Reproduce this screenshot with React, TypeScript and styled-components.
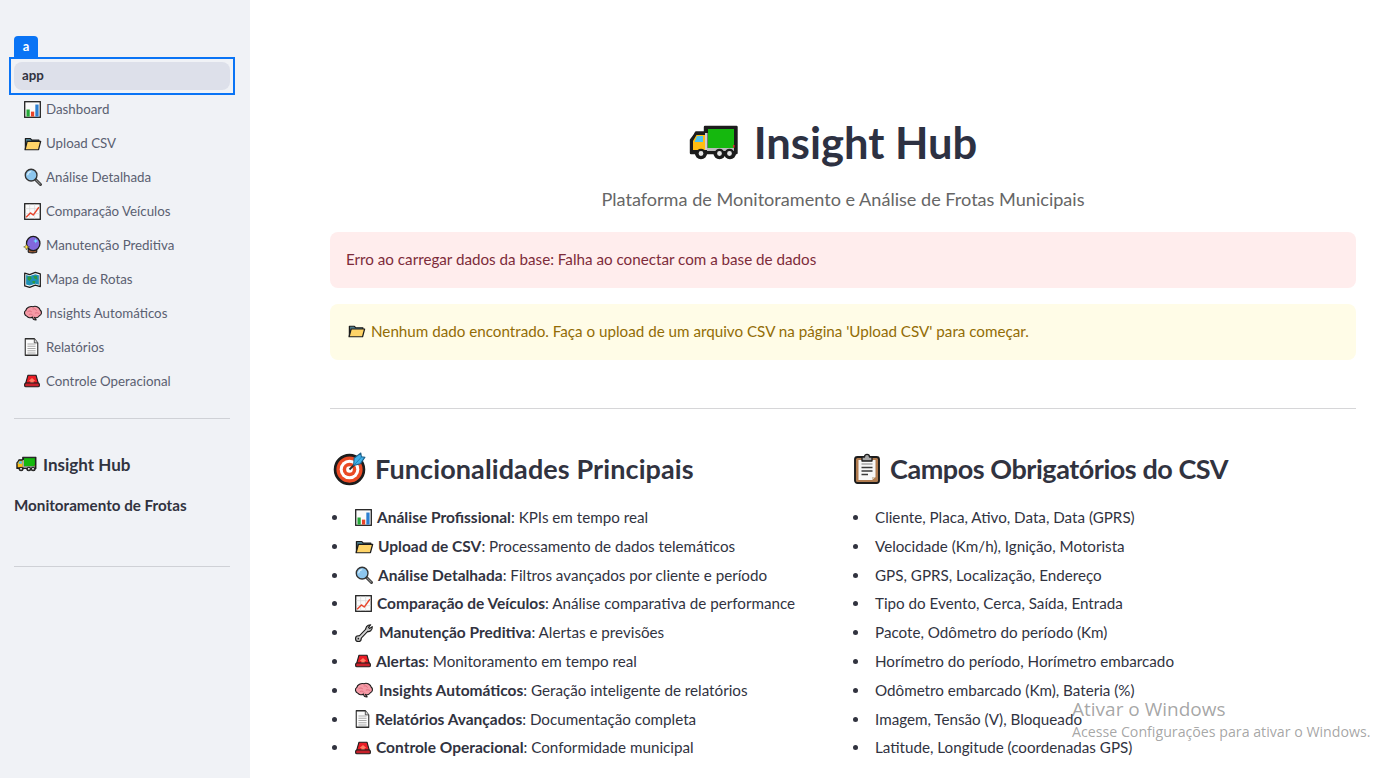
import React from "react";
import styled, { createGlobalStyle } from "styled-components";

const Global = createGlobalStyle`
  html, body { margin: 0; padding: 0; height: 100%; background: #fff; }
  body { font-family: Lato, "Noto Sans", sans-serif; color: #31333f; overflow: hidden; }
  #root { height: 100%; }
`;

const INK = "#1c1c1c";

type IconName = "truck" | "chart" | "folder" | "search" | "trend" | "ball" | "map" | "brain" | "doc" | "siren" | "target" | "clipboard" | "wrench";

const VIEWS: Partial<Record<IconName, string>> = {
  truck: "0 0 50 37",
  target: "0 0 32 32",
  clipboard: "0 0 26 31",
};

const art: Record<IconName, React.ReactNode> = {
  truck: (
    <>
      <path d="M16 3H47.5V29H46a5 5 0 0 1-10 0h-.5a5 5 0 0 1-10 0H17a5 5 0 0 1-10 0H2V16L5 12 7 8.5H16Z" fill={INK} stroke={INK} strokeWidth="2.4" strokeLinejoin="round" />
      <rect x="19" y="5" width="26" height="19" fill="#15b80e" />
      <path d="M4 17 7.5 11H16V26H4Z" fill="#ffbf12" />
      <path d="M8 12H14V18H5.5Z" fill="#4fc3ee" />
      <rect x="16" y="9" width="2.5" height="17" fill="#cfcfcf" />
      <rect x="18" y="24" width="27" height="3" fill="#bdbdbd" />
      <rect x="44" y="21" width="1.6" height="2.6" fill="#d4342b" />
      <circle cx="12" cy="29.5" r="3.6" fill="#e6e6e6" stroke={INK} strokeWidth="2.4" />
      <circle cx="30.5" cy="29.5" r="3.6" fill="#e6e6e6" stroke={INK} strokeWidth="2.4" />
      <circle cx="40.5" cy="29.5" r="3.6" fill="#e6e6e6" stroke={INK} strokeWidth="2.4" />
    </>
  ),
  chart: (
    <>
      <rect x="1" y="1" width="22" height="22" fill="#fbfbfb" stroke={INK} strokeWidth="1.8" />
      <rect x="3.5" y="12" width="4.6" height="10" fill="#25a838" />
      <rect x="9.8" y="15" width="4.6" height="7" fill="#e8452c" />
      <rect x="16" y="5" width="4.6" height="17" fill="#2c7fd1" />
    </>
  ),
  folder: (
    <>
      <path d="M2 21V4H9L11 6.5H21V11H6L2 21Z" fill="#4d7d8d" stroke={INK} strokeWidth="1.8" strokeLinejoin="round" />
      <path d="M4.500 8.500H23.500L20.500 22H1.500Z" fill="#ffd468" stroke={INK} strokeWidth="1.8" strokeLinejoin="round" />
    </>
  ),
  search: (
    <>
      <path d="M15 15 22 22" stroke="#3a3a3a" strokeWidth="4" strokeLinecap="round" />
      <path d="M16 16 21.5 21.5" stroke="#8d8d8d" strokeWidth="1.4" strokeLinecap="round" />
      <circle cx="9.5" cy="9.5" r="7.8" fill="#8cc6ee" stroke="#333" strokeWidth="1.8" />
      <path d="M5 9a4.5 4.5 0 0 1 4-4" stroke="#dff1fc" strokeWidth="1.6" fill="none" strokeLinecap="round" />
    </>
  ),
  trend: (
    <>
      <rect x="1" y="1" width="22" height="22" fill="#fbfbfb" stroke={INK} strokeWidth="1.8" />
      <path d="M8 2V22M15 2V22M2 8H22M2 15H22" stroke="#d7d7d7" strokeWidth="1" />
      <path d="M3 20 9 14 13 17 21 6" fill="none" stroke="#e8452c" strokeWidth="2" strokeLinejoin="round" />
    </>
  ),
  ball: (
    <>
      <path d="M6 17H18V21C18 23 6 23 6 21Z" fill="#9a5a33" stroke={INK} strokeWidth="1.6" strokeLinejoin="round" />
      <circle cx="13" cy="10" r="9.500" fill="#8168dc" stroke={INK} strokeWidth="1.8" />
      <path d="M16.500 3 17.500 5.500 20 6.500 17.500 7.500 16.500 10 15.500 7.500 13 6.500 15.500 5.500Z" fill="#6fdcff" />
      <path d="M3.500 10.500 4.800 13.500 7.800 14.500 4.800 15.700 3.500 18.700 2.200 15.700-.5 14.500 2.200 13.500Z" fill="#ffe23d" stroke={INK} strokeWidth=".6" />
    </>
  ),
  map: (
    <>
      <path d="M1 3 8 5 16 2 23 4V22L16 20 8 23 1 21Z" fill="#fff" stroke={INK} strokeWidth="1.8" strokeLinejoin="round" />
      <path d="M3 5.500 8 7 16 4.500 21 6V19.500L16 18 8 20.500 3 19Z" fill="#1f8fb5" />
      <path d="M5 8 9 7.500 11 10 8 14 5 12ZM13 7 18 7 19 12 15 11ZM12 14 16 14 15 18 12 17Z" fill="#2f9a3d" />
    </>
  ),
  brain: (
    <>
      <path d="M4 17C0 15-.5 10 2.500 8 3 4 8 1.500 12 2.500 16 1 21 3.500 21.500 7.500 24.500 10 23.500 15 20.500 16 19.500 19 16 19.500 14 18.500 14.500 21 17 22 16 22.500 13 22.500 11.500 20 11.500 18 9 20 5.500 19.500 4 17Z" fill="#f59aa6" stroke={INK} strokeWidth="1.5" strokeLinejoin="round" />
      <path d="M5 10C7 8 9 9 10 10M12 6C14 5 16 6 16.500 8M7 14C9 13 11 14 12 15.500M15 12C17 11 19 12 20 13" fill="none" stroke="#d96577" strokeWidth="1.1" strokeLinecap="round" />
    </>
  ),
  doc: (
    <>
      <path d="M2 1H16.500L22 6.500V23H2Z" fill="#fbfbfb" stroke="#2e2e2e" strokeWidth="1.800" strokeLinejoin="round" />
      <path d="M16.500 1V6.500H22" fill="#d9d9d9" stroke="#2e2e2e" strokeWidth="1.100" />
      <path d="M5.500 8H18.500M5.500 11H18.500M5.500 14H18.500M5.500 17H18.500M5.500 20H18.500" stroke="#a9a9a9" strokeWidth="1.400" />
    </>
  ),
  siren: (
    <>
      <path d="M6 2H18L21.500 16H2.500Z" fill="#ea1d26" stroke={INK} strokeWidth="1.700" strokeLinejoin="round" />
      <path d="M12 7 17 12H14.500V16H9.500V12H7Z" fill="#ff7d63" />
      <rect x="1" y="15.500" width="22" height="6.500" rx="2" fill="#c8202a" stroke={INK} strokeWidth="1.700" />
    </>
  ),
  target: (
    <>
      <circle cx="16" cy="17" r="14" fill="#ea4a24" stroke={INK} strokeWidth="2.600" />
      <circle cx="16" cy="17" r="9.500" fill="#fff" />
      <circle cx="16" cy="17" r="6.600" fill="#ea4a24" />
      <circle cx="16" cy="17" r="3.200" fill="#fff" />
      <path d="M16 17 22 11" stroke="#2b2b2b" strokeWidth="1.800" />
      <path d="M20 13 20.500 6 27 1 27.500 4.500 31 5 26.500 11.500Z" fill="#3fb0e8" stroke="#1d5f88" strokeWidth="1" strokeLinejoin="round" />
      <path d="M21 12 28 4.500" stroke="#1d7fb8" strokeWidth=".9" />
    </>
  ),
  clipboard: (
    <>
      <rect x="1" y="4" width="24" height="26" rx="2.500" fill="#b17c50" stroke={INK} strokeWidth="1.900" />
      <path d="M4.500 7H21.500V24L18 27H4.500Z" fill="#f8f8f8" />
      <path d="M18 27V24H21.500Z" fill="#d6c6b0" />
      <path d="M7.500 11H18.500" stroke="#9b9b9b" strokeWidth="1.300" />
      <path d="M7.500 14.500H18.500M7.500 18H18.500M7.500 21.500H14" stroke="#3a3a3a" strokeWidth="1.300" />
      <path d="M8 4H10.500C10.500 .5 15.500 .5 15.500 4H18V8H8Z" fill="#a7a7a7" stroke={INK} strokeWidth="1.300" strokeLinejoin="round" />
    </>
  ),
  wrench: (
    <>
      <path d="M5 19.500 15.500 8.500" stroke={INK} strokeWidth="5.400" strokeLinecap="round" />
      <path d="M15 9C13 5 16 1 21 1L18 4.500 19.500 6 23 3.500C23.500 8 19.500 11.500 15.500 9.500Z" fill="#bdbdbd" stroke={INK} strokeWidth="1.500" strokeLinejoin="round" />
      <circle cx="4.500" cy="19.500" r="3.800" fill="#bdbdbd" stroke={INK} strokeWidth="1.500" />
      <path d="M5 19.500 15.500 8.500" stroke="#d5d5d5" strokeWidth="2.600" strokeLinecap="round" />
      <circle cx="4.500" cy="19.500" r="1.100" fill={INK} />
    </>
  ),
};

const Glyph = styled.svg<{ $w: number; $h: number; $gap: number }>`
  flex: none;
  width: ${(p) => p.$w}px;
  height: ${(p) => p.$h}px;
  margin-right: ${(p) => p.$gap}px;
  overflow: visible;
`;

function Icon({ name, w = 17, h, gap = 0 }: { name: IconName; w?: number; h?: number; gap?: number }) {
  return (
    <Glyph viewBox={VIEWS[name] ?? "0 0 24 24"} $w={w} $h={h ?? w} $gap={gap} preserveAspectRatio="none" aria-hidden>
      {art[name]}
    </Glyph>
  );
}

const Page = styled.div`
  position: relative;
  display: flex;
  height: 778px;
  overflow: hidden;
`;

const Sidebar = styled.aside`
  position: relative;
  flex: none;
  width: 250px;
  box-sizing: border-box;
  padding: 62px 20px 0 14px;
  background: #f0f2f6;
`;

const Nav = styled.nav`
  display: flex;
  flex-direction: column;
  gap: 6px;
`;

const Tag = styled.span`
  position: absolute;
  left: 14px;
  top: 36px;
  width: 24px;
  height: 21px;
  border-radius: 4px 4px 0 0;
  background: #0a74f5;
  color: #fff;
  font-size: 13px;
  line-height: 20px;
  font-weight: 700;
  text-align: center;
`;

const ActiveFrame = styled.div`
  margin: -5px;
  padding: 3px;
  border: 2px solid #0a74f5;
`;

const ActiveLink = styled.div`
  box-sizing: border-box;
  height: 28px;
  padding: 0 0 2px 8px;
  border-radius: 8px;
  background: #dde0ea;
  color: #31333f;
  font-size: 13.3px;
  font-weight: 700;
  line-height: 26px;
`;

const NavLink = styled.div`
  display: flex;
  align-items: center;
  box-sizing: border-box;
  height: 28px;
  padding: 0 0 2px 10px;
  color: #5a6071;
  font-size: 13.3px;
`;

const NavSlot = styled.span`
  display: flex;
  flex: none;
  width: 22px;
`;

const SideRule = styled.hr`
  margin: 22px 0 0;
  border: 0;
  border-top: 1px solid #cfd1d6;
`;

const SideBrand = styled.div`
  display: flex;
  align-items: center;
  box-sizing: border-box;
  height: 30px;
  margin-top: 31px;
  padding: 0 0 2px 2px;
  color: #31333f;
  font-size: 17px;
  font-weight: 700;
`;

const SideTagline = styled.div`
  box-sizing: border-box;
  height: 24px;
  margin-top: 14px;
  margin-bottom: 48px;
  padding-bottom: 2px;
  color: #31333f;
  font-size: 15.2px;
  font-weight: 700;
  line-height: 22px;
`;

const Main = styled.main`
  flex: 1;
  min-width: 0;
  padding: 114px 31px 0 80px;
`;

const Title = styled.h1`
  display: flex;
  align-items: center;
  justify-content: center;
  box-sizing: border-box;
  height: 58px;
  margin: 0;
  padding: 0 20px 2px 0;
  color: #2d3142;
  font-size: 43.5px;
  font-weight: 700;
`;

const Subtitle = styled.p`
  box-sizing: border-box;
  height: 30px;
  margin: 13px 0 0;
  color: #666;
  font-size: 18.1px;
  line-height: 28px;
  text-align: center;
`;

const Alert = styled.div<{ $kind: "error" | "warning" }>`
  display: flex;
  align-items: center;
  box-sizing: border-box;
  height: 56px;
  margin-top: ${(p) => (p.$kind === "error" ? 17 : 16)}px;
  padding: 0 0 2px ${(p) => (p.$kind === "error" ? 16 : 18)}px;
  border-radius: 8px;
  background: ${(p) => (p.$kind === "error" ? "#ffeded" : "#fffce7")};
  color: ${(p) => (p.$kind === "error" ? "#7d2b3a" : "#926c05")};
  font-size: 15.2px;
`;

const Rule = styled.hr`
  margin: 48px 0 0;
  border: 0;
  border-top: 1px solid #d6d6d8;
`;

const Columns = styled.div`
  display: grid;
  grid-template-columns: 1fr 1fr;
  column-gap: 16px;
  margin-top: 41px;
`;

const Heading = styled.h2<{ $inset: number; $track: number }>`
  display: flex;
  align-items: center;
  box-sizing: border-box;
  height: 40px;
  margin: 0;
  padding: 0 0 3px ${(p) => p.$inset}px;
  color: #31333f;
  font-size: 27px;
  font-weight: 700;
  letter-spacing: ${(p) => p.$track}px;
`;

const List = styled.ul`
  margin: 13px 0 0;
  padding: 0 0 0 24px;
  list-style: none;
`;

const Item = styled.li`
  position: relative;
  height: 28.8px;
  font-size: 15.2px;
  line-height: 28.8px;

  &::before {
    content: "";
    position: absolute;
    left: -22.5px;
    top: 12px;
    width: 5px;
    height: 5px;
    border-radius: 50%;
    background: #31333f;
  }
`;

const ItemBody = styled.span`
  display: inline-flex;
  align-items: center;
  height: 28.8px;
  padding-left: 1px;
  vertical-align: top;
  white-space: pre;
`;

const Strong = styled.b`
  font-size: 15.5px;
  font-weight: 700;
`;

const Watermark = styled.div`
  position: absolute;
  left: 1072px;
  top: 696px;
  color: rgba(110, 110, 110, 0.62);
  font-family: "Open Sans", sans-serif;
  pointer-events: none;
`;

const WatermarkTitle = styled.div`
  font-size: 19px;
  line-height: 26px;
`;

const WatermarkText = styled.div`
  font-size: 14.2px;
  line-height: 20px;
`;

const nav: [IconName, string, number?, number?][] = [
  ["chart", "Dashboard"],
  ["folder", "Upload CSV", 17, 15],
  ["search", "Análise Detalhada", 18],
  ["trend", "Comparação Veículos"],
  ["ball", "Manutenção Preditiva", 17, 18],
  ["map", "Mapa de Rotas"],
  ["brain", "Insights Automáticos", 18, 16],
  ["doc", "Relatórios", 15, 18],
  ["siren", "Controle Operacional", 16, 14],
];

const features: [IconName, number, number, number, string, string][] = [
  ["chart", 17, 17, 5, "Análise Profissional", ": KPIs em tempo real"],
  ["folder", 18, 15, 5, "Upload de CSV", ": Processamento de dados telemáticos"],
  ["search", 18, 18, 5, "Análise Detalhada", ": Filtros avançados por cliente e período"],
  ["trend", 17, 17, 5, "Comparação de Veículos", ": Análise comparativa de performance"],
  ["wrench", 18, 18, 6, "Manutenção Preditiva", ": Alertas e previsões"],
  ["siren", 16, 14, 5, "Alertas", ": Monitoramento em tempo real"],
  ["brain", 18, 16, 6, "Insights Automáticos", ": Geração inteligente de relatórios"],
  ["doc", 15, 18, 5, "Relatórios Avançados", ": Documentação completa"],
  ["siren", 16, 14, 5, "Controle Operacional", ": Conformidade municipal"],
];

const fields = [
  "Cliente, Placa, Ativo, Data, Data (GPRS)",
  "Velocidade (Km/h), Ignição, Motorista",
  "GPS, GPRS, Localização, Endereço",
  "Tipo do Evento, Cerca, Saída, Entrada",
  "Pacote, Odômetro do período (Km)",
  "Horímetro do período, Horímetro embarcado",
  "Odômetro embarcado (Km), Bateria (%)",
  "Imagem, Tensão (V), Bloqueado",
  "Latitude, Longitude (coordenadas GPS)",
];

export default function App() {
  return (
    <Page>
      <Global />
      <Sidebar>
        <Tag>a</Tag>
        <Nav>
          <ActiveFrame>
            <ActiveLink>app</ActiveLink>
          </ActiveFrame>
          {nav.map(([icon, label, w, h]) => (
            <NavLink key={label}>
              <NavSlot>
                <Icon name={icon} w={w ?? 17} h={h} />
              </NavSlot>
              {label}
            </NavLink>
          ))}
        </Nav>
        <SideRule />
        <SideBrand>
          <Icon name="truck" w={21} h={16} gap={6} />
          Insight Hub
        </SideBrand>
        <SideTagline>Monitoramento de Frotas</SideTagline>
        <SideRule />
      </Sidebar>
      <Main>
        <Title>
          <Icon name="truck" w={50} h={37} gap={15} />
          Insight Hub
        </Title>
        <Subtitle>Plataforma de Monitoramento e Análise de Frotas Municipais</Subtitle>
        <Alert $kind="error">Erro ao carregar dados da base: Falha ao conectar com a base de dados</Alert>
        <Alert $kind="warning">
          <Icon name="folder" w={17} h={14} gap={6} />
          Nenhum dado encontrado. Faça o upload de um arquivo CSV na página 'Upload CSV' para começar.
        </Alert>
        <Rule />
        <Columns>
          <div>
            <Heading $inset={3} $track={0.1}>
              <Icon name="target" w={33} gap={9} />
              Funcionalidades Principais
            </Heading>
            <List>
              {features.map(([icon, w, h, gap, name, rest]) => (
                <Item key={name}>
                  <ItemBody>
                    <Icon name={icon} w={w} h={h} gap={gap} />
                    <Strong>{name}</Strong>
                    {rest}
                  </ItemBody>
                </Item>
              ))}
            </List>
          </div>
          <div>
            <Heading $inset={3} $track={-0.45}>
              <Icon name="clipboard" w={26} h={31} gap={10} />
              Campos Obrigatórios do CSV
            </Heading>
            <List>
              {fields.map((f) => (
                <Item key={f}>{f}</Item>
              ))}
            </List>
          </div>
        </Columns>
      </Main>
      <Watermark>
        <WatermarkTitle>Ativar o Windows</WatermarkTitle>
        <WatermarkText>Acesse Configurações para ativar o Windows.</WatermarkText>
      </Watermark>
    </Page>
  );
}
